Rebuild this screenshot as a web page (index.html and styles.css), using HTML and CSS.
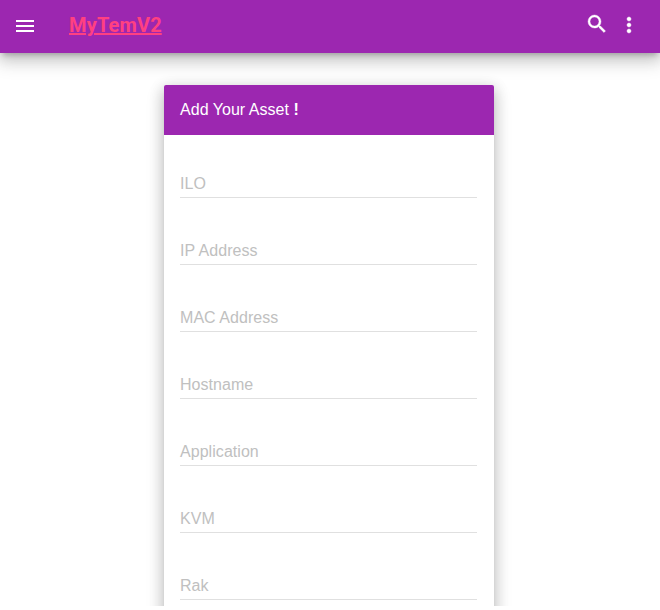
FILE: index.html
```html
<!DOCTYPE html>
<html lang="en">
<head>
<meta charset="utf-8">
<title>MyTemV2</title>
<link rel="stylesheet" href="styles.css">
</head>
<body>
<div class="viewport">
<header class="bar">
<svg class="icon menu" viewBox="0 0 24 24"><path d="M3 18h18v-2H3v2zm0-5h18v-2H3v2zm0-7v2h18V6H3z"/></svg>
<a class="brand" href="#">MyTemV2</a>
<svg class="icon search" viewBox="0 0 24 24"><path d="M15.5 14h-.79l-.28-.27A6.471 6.471 0 0 0 16 9.500 6.500 6.500 0 1 0 9.500 16c1.610 0 3.090-.59 4.230-1.570l.27.28v.79l5 4.990L20.490 19l-4.990-5zm-6 0C7.010 14 5 11.990 5 9.500S7.010 5 9.500 5 14 7.010 14 9.500 11.990 14 9.500 14z"/></svg>
<svg class="icon more" viewBox="0 0 24 24"><path d="M12 8c1.100 0 2-.9 2-2s-.9-2-2-2-2 .9-2 2 .9 2 2 2zm0 2c-1.100 0-2 .9-2 2s.9 2 2 2 2-.9 2-2-.9-2-2-2zm0 6c-1.100 0-2 .9-2 2s.9 2 2 2 2-.9 2-2-.9-2-2-2z"/></svg>
</header>
<main class="card">
<h1 class="title">Add Your Asset <b>!</b></h1>
<form class="fields">
<label class="field">ILO</label>
<label class="field">IP Address</label>
<label class="field">MAC Address</label>
<label class="field">Hostname</label>
<label class="field">Application</label>
<label class="field">KVM</label>
<label class="field">Rak</label>
</form>
</main>
</div>
</body>
</html>
```
FILE: styles.css
```css
* { box-sizing: border-box; }
body { margin: 0; background: #fff; font-family: "Liberation Sans", Arial, sans-serif; }
.viewport { height: 606px; overflow: hidden; }
.bar { display: flex; height: 53px; padding: 0 19px 0 13px; background: #9c27b0; box-shadow: 0 8px 17px 2px rgba(0,0,0,.14), 0 3px 14px 2px rgba(0,0,0,.12), 0 5px 5px -3px rgba(0,0,0,.2); }
.icon { width: 24px; height: 24px; fill: #fff; flex: none; }
.menu { margin-top: 14px; }
.brand { margin: 12px auto 0 32px; font: 700 20px/26px Roboto, sans-serif; letter-spacing: .15px; color: #ff4081; text-decoration-thickness: 2px; }
.search { margin-top: 12px; stroke: #fff; stroke-width: .4; }
.more { margin: 13px 0 0 8px; stroke: #fff; stroke-width: .4; }
.card { width: 330px; height: 620px; margin: 32px 0 0 164px; border-radius: 2px; background: #fff; box-shadow: 0 8px 17px 2px rgba(0,0,0,.14), 0 3px 14px 2px rgba(0,0,0,.12), 0 5px 5px -3px rgba(0,0,0,.2); }
.title { height: 50px; margin: 0; padding-left: 16px; border-radius: 2px 2px 0 0; background: #9c27b0; color: #fff; font-size: 16px; font-weight: 400; line-height: 49px; letter-spacing: .03px; }
.fields { display: flex; flex-direction: column; gap: 39px; padding: 35px 17px 0 16px; }
.field { height: 28px; border-bottom: 1px solid #e0e0e0; color: #c0c0c0; font-size: 16px; line-height: 27px; letter-spacing: .05px; }
```
